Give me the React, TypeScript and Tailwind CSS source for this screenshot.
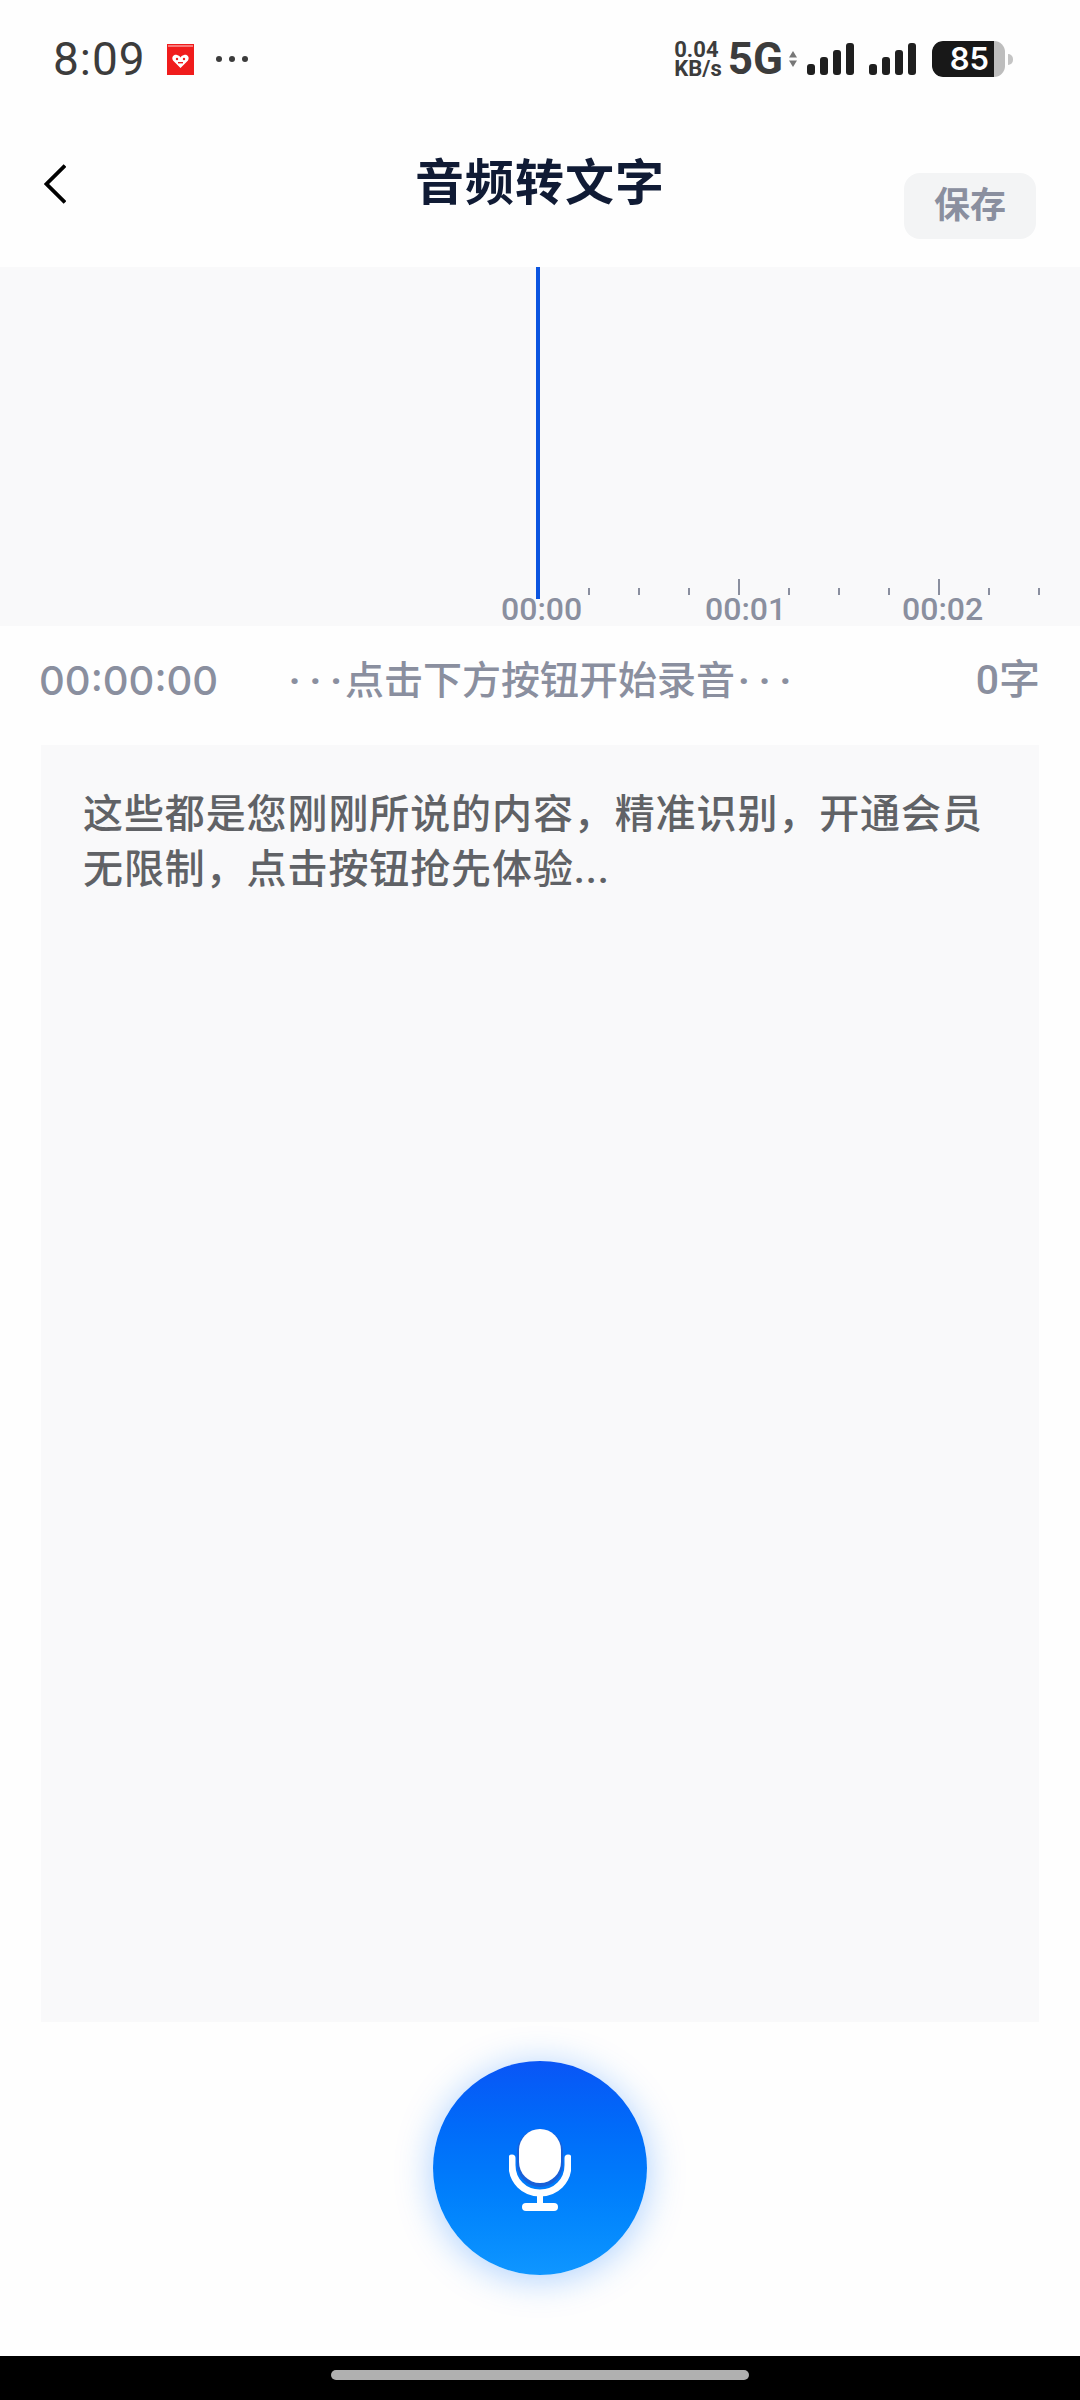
import { useMemo } from "react";

const sans = "font-['Roboto','Noto_Sans_CJK_SC',sans-serif]";

function SignalBars() {
  return (
    <svg width="48" height="32" viewBox="0 0 48 32" fill="#1f1f1f">
      <rect x="0" y="21" width="8" height="11" rx="3" />
      <rect x="13" y="14" width="8" height="18" rx="3" />
      <rect x="26" y="7" width="8" height="25" rx="3" />
      <rect x="39" y="0" width="8" height="32" rx="3" />
    </svg>
  );
}

function AppBadge() {
  return (
    <svg width="27" height="31" viewBox="0 0 27 31">
      <rect x="0" y="0" width="27" height="31" fill="#f01c1c" />
      <rect x="1" y="1" width="25" height="2" fill="#f87a7a" />
      <path
        d="M13.5 24 L6 16.5 C4 13 7 10 10 11 C12 11.6 13 12.5 13.5 13.5 C14 12.5 15 11.6 17 11 C20 10 23 13 21 16.5 Z"
        fill="#fff"
      />
      <circle cx="10" cy="15" r="1.2" fill="#f01c1c" />
      <circle cx="17" cy="15" r="1.2" fill="#f01c1c" />
      <rect x="11" y="18" width="5" height="1.4" fill="#f01c1c" />
    </svg>
  );
}

function StatusBar() {
  return (
    <div className="flex h-[118px] items-start justify-between pt-[40px] pl-[53px] pr-[67px] text-[#3c3c3c]">
      <div className="flex items-center">
        <span className="text-[46px] leading-[38px] tracking-[1px]">8:09</span>
        <span className="ml-[21px] flex">
          <AppBadge />
        </span>
        <span className="ml-[22px] flex gap-[7px]">
          <span className="h-[6px] w-[6px] rounded-full bg-[#3c3c3c]" />
          <span className="h-[6px] w-[6px] rounded-full bg-[#3c3c3c]" />
          <span className="h-[6px] w-[6px] rounded-full bg-[#3c3c3c]" />
        </span>
      </div>
      <div className="flex items-center">
        <div className="flex flex-col text-[22px] font-bold leading-[19px]">
          <span>0.04</span>
          <span>KB/s</span>
        </div>
        <span className="ml-[6px] text-[44px] font-bold leading-[38px]">5G</span>
        <svg className="ml-[6px]" width="8" height="16" viewBox="0 0 8 16" fill="#777">
          <path d="M4 0 L8 6.5 H0 Z" />
          <path d="M4 16 L8 9.5 H0 Z" />
        </svg>
        <span className="ml-[10px] flex">
          <SignalBars />
        </span>
        <span className="ml-[14px] flex">
          <SignalBars />
        </span>
        <div className="ml-[15px] flex items-center">
          <div className="flex h-[36px] w-[73px] items-center overflow-hidden rounded-[11px] bg-[#bdbdbd]">
            <div className="flex h-full w-[62px] items-center justify-end rounded-l-[11px] bg-[#181818] pr-[5px] font-['Inter',sans-serif] text-[31px] font-semibold text-white">
              85
            </div>
          </div>
          <span className="ml-[3px] h-[11px] w-[5px] rounded-r-full bg-[#c4c4c4]" />
        </div>
      </div>
    </div>
  );
}

function Header() {
  return (
    <div className="flex h-[149px] items-start justify-between px-[44px]">
      <div className="w-[132px] pt-[46px]">
        <svg width="22" height="40" viewBox="0 0 22 40" fill="none" stroke="#000" strokeWidth="3.8">
          <path d="M21 1.5 L2.5 20 L21 38.5" />
        </svg>
      </div>
      <h1 className="pt-[38px] text-[49px] font-bold leading-[56px] tracking-[1px] text-[#101b35]">
        音频转文字
      </h1>
      <div className="mt-[55px] flex h-[66px] w-[132px] items-center justify-center rounded-[16px] bg-[#f3f4f5] text-[36px] font-bold text-[#8a8f9f]">
        保存
      </div>
    </div>
  );
}

function Timeline() {
  const ticks = useMemo(() => Array.from({ length: 11 }, (_, i) => i), []);
  return (
    <div className="relative flex h-[359px] flex-col justify-end bg-[#f9f9fa]">
      <div className="absolute bottom-[27px] left-[536px] top-0 w-[4px] bg-[#0b55e0]" />
      <svg width="1080" height="20" viewBox="0 0 1080 20" className="mb-[-3px] block">
        {ticks.map((i) =>
          i === 0 ? null : (
            <rect
              key={i}
              x={538 + i * 50}
              y={i % 4 === 0 ? 3 : 12}
              width="2"
              height={i % 4 === 0 ? 16 : 7}
              fill="#8a8f9f"
            />
          )
        )}
      </svg>
      <div className="mb-[1px] flex h-[32px] pl-[501px] text-[32px] font-medium leading-[32px] text-[#8a8f9f]">
        <span className="w-[204px]">00:00</span>
        <span className="w-[197px]">00:01</span>
        <span>00:02</span>
      </div>
    </div>
  );
}

function InfoRow() {
  return (
    <div className="flex h-[119px] items-center justify-between pb-[9px] pl-[39px] pr-[40px] text-[#8a8f9f]">
      <span className="w-[201px] font-['Inter',sans-serif] text-[40px] font-medium">00:00:00</span>
      <span className="flex items-center text-[39px] font-medium">
        <span className="mr-[-6px] font-bold tracking-[9px]">···</span>
        <span>点击下方按钮开始录音</span>
        <span className="ml-[3px] mr-[-9px] font-bold tracking-[9px]">···</span>
      </span>
      <span className="w-[200px] text-right text-[41px] font-medium">0字</span>
    </div>
  );
}

function Transcript() {
  return (
    <div className="mx-[41px] h-[1277px] bg-[#f9f9fa] px-[42px] pt-[42px] text-[40px] font-medium leading-[55px] tracking-[0.9px] text-[#606266]">
      <p>这些都是您刚刚所说的内容，精准识别，开通会员</p>
      <p>无限制，点击按钮抢先体验...</p>
    </div>
  );
}

function MicButton() {
  return (
    <div className="flex h-[334px] justify-center pt-[39px]">
      <div className="flex h-[214px] w-[214px] items-center justify-center rounded-full bg-gradient-to-b from-[#0a55f6] to-[#0f96ff] shadow-[0_4px_36px_rgba(15,120,255,0.35)]">
        <svg className="mt-[5px]" width="62" height="84" viewBox="0 0 62 84" fill="none">
          <path
            d="M3 29 V36 C3 52 15 64 31 64 C47 64 59 52 59 36 V29"
            stroke="#fff"
            strokeWidth="7"
            strokeLinecap="round"
          />
          <rect x="8" y="0" width="46" height="58" rx="23" fill="#1860d8" />
          <rect x="10" y="0" width="42" height="54" rx="21" fill="#fff" />
          <rect x="28" y="64" width="6" height="14" fill="#fff" />
          <rect x="13" y="74" width="36" height="8" rx="4" fill="#fff" />
        </svg>
      </div>
    </div>
  );
}

export default function App() {
  return (
    <div className={`flex h-[2400px] w-[1080px] flex-col overflow-hidden bg-[#fefefe] ${sans}`}>
      <StatusBar />
      <Header />
      <Timeline />
      <InfoRow />
      <Transcript />
      <MicButton />
      <div className="flex h-[44px] items-start justify-center bg-black pt-[14px]">
        <div className="h-[10px] w-[418px] rounded-full bg-[#b0b0b0]" />
      </div>
    </div>
  );
}
